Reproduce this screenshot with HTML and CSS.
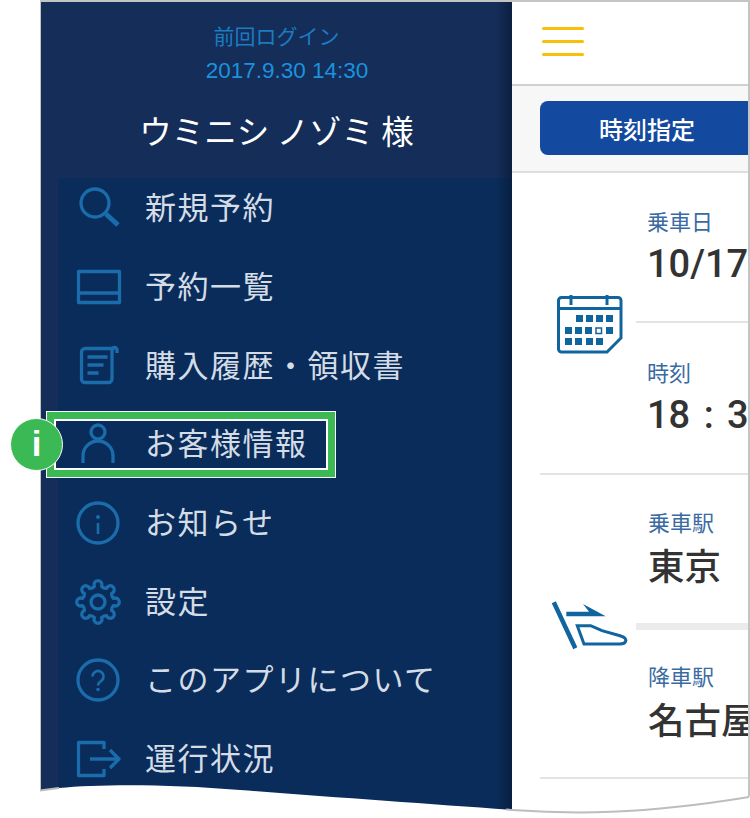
FILE: index.html
```html
<!DOCTYPE html>
<html lang="ja">
<head>
  <meta charset="UTF-8" />
  <title>お客様情報</title>
  <link rel="stylesheet" href="styles.css">
</head>
<body>
  <div class="stage">
    <div class="frame">
      <!-- Drawer -->
      <aside class="drawer">
        <div class="account">
          <p class="login-label">前回ログイン</p>
          <p class="login-date">2017.9.30 14:30</p>
          <p class="user-name">ウミニシ ノゾミ 様</p>
        </div>
        <nav class="menu">
          <ul class="menu-list">
            <li class="menu-item">
              <svg class="menu-icon" viewBox="0 0 48 48"><circle cx="21" cy="19" r="14"/><path class="thick" d="M32 30l12 11"/></svg>
              <span>新規予約</span>
            </li>
            <li class="menu-item">
              <svg class="menu-icon" viewBox="0 0 48 48"><rect x="4.5" y="8.5" width="41" height="31"/><path d="M4.5 30h41"/></svg>
              <span>予約一覧</span>
            </li>
            <li class="menu-item">
              <svg class="menu-icon" viewBox="0 0 48 48"><path d="M43 11V8a2.500 2.500 0 0 0-5 0v29a3.500 3.500 0 0 1-3.500 3.500H11A3.500 3.500 0 0 1 7.500 37V10A3.500 3.500 0 0 1 11 6.500h29.500"/><path d="M13.500 15h20M13.500 23h16M13.500 31h11"/></svg>
              <span>購入履歴・領収書</span>
            </li>
            <li class="menu-item">
              <svg class="menu-icon" viewBox="0 0 48 48"><circle cx="24" cy="12" r="7"/><path d="M9 43v-7a15 15 0 0 1 30 0v7"/></svg>
              <span>お客様情報</span>
            </li>
            <li class="menu-item">
              <svg class="menu-icon" viewBox="0 0 48 48"><circle cx="24" cy="24" r="20"/><path class="thin" d="M24 24v11"/><circle class="dot" cx="24" cy="18" r="2"/></svg>
              <span>お知らせ</span>
            </li>
            <li class="menu-item">
              <svg class="menu-icon" viewBox="0 0 48 48"><path d="M20.400 8.400A4 4 0 1 1 27.600 8.400A6 6 0 0 0 32.500 10.400A4 4 0 1 1 37.600 15.500A6 6 0 0 0 39.600 20.400A4 4 0 1 1 39.600 27.600A6 6 0 0 0 37.600 32.500A4 4 0 1 1 32.500 37.600A6 6 0 0 0 27.600 39.600A4 4 0 1 1 20.400 39.600A6 6 0 0 0 15.500 37.600A4 4 0 1 1 10.400 32.500A6 6 0 0 0 8.400 27.600A4 4 0 1 1 8.400 20.400A6 6 0 0 0 10.400 15.500A4 4 0 1 1 15.500 10.400A6 6 0 0 0 20.400 8.400Z"/><circle cx="24" cy="24" r="7"/></svg>
              <span>設定</span>
            </li>
            <li class="menu-item">
              <svg class="menu-icon" viewBox="0 0 48 48"><circle cx="24" cy="24" r="20"/><path class="thin" d="M18.500 20.500a5.500 5.500 0 1 1 8.500 4.600c-2 1.200-3 2-3 4.400"/><circle class="dot" cx="24" cy="33.500" r="1.800"/></svg>
              <span>このアプリについて</span>
            </li>
            <li class="menu-item">
              <svg class="menu-icon" viewBox="0 0 48 48"><path d="M30 14V7.500H4.500v33H30V34"/><path d="M16 24h28M36 15l9 9-9 9"/></svg>
              <span>運行状況</span>
            </li>
          </ul>
        </nav>
      </aside>

      <!-- Main screen behind the drawer -->
      <main class="main">
        <header class="topbar">
          <div class="burger"><i></i><i></i><i></i></div>
        </header>
        <div class="tabs">
          <button class="tab-btn">時刻指定</button>
        </div>

        <section class="group">
          <div class="group-icon">
            <svg class="calendar" viewBox="0 0 70 62">
              <path d="M7 4.500h56a3 3 0 0 1 3 3V45L52 59H6.500a3 3 0 0 1-3-3V7.500a3 3 0 0 1 3-3z"/>
              <path d="M3.500 15.500H66M16 2v10M52 2v10"/>
              <g class="cells">
                <rect x="21" y="22" width="7" height="7"/><rect x="31" y="22" width="7" height="7"/><rect x="41" y="22" width="7" height="7"/><rect x="51" y="22" width="7" height="7"/>
                <rect x="10" y="34" width="7" height="7"/><rect x="20" y="34" width="7" height="7"/><rect x="30" y="34" width="7" height="7"/><rect x="51" y="34" width="7" height="7"/>
                <rect x="10" y="45" width="7" height="7"/><rect x="20" y="45" width="7" height="7"/><rect x="31" y="45" width="7" height="7"/><rect x="41" y="45" width="7" height="7"/>
              </g>
              <rect x="41" y="35" width="5.500" height="5.500" stroke-width="1.500"/>
            </svg>
          </div>
          <div class="fields">
            <div class="field field-line">
              <p class="field-label">乗車日</p>
              <p class="field-value">10/17</p>
            </div>
            <div class="field field-time">
              <p class="field-label">時刻</p>
              <p class="field-value">18 : 30</p>
            </div>
          </div>
        </section>

        <section class="group">
          <div class="group-icon">
            <svg class="train" viewBox="0 0 80 55">
              <path class="bold" d="M4.800 3.300l21.500 46"/>
              <polygon class="solid" points="17.300,12.700 40,12.700 34,5 56.700,17.300 17.300,17.300"/>
              <path d="M28.300 26.700h13.400L53 31.700l18 5c5 1.400 6.500 3.500 5.500 6-.8 1.800-2.500 2.300-5.500 2.300H35z"/>
            </svg>
          </div>
          <div class="fields">
            <div class="field field-from">
              <p class="field-label">乗車駅</p>
              <p class="field-value station">東京</p>
            </div>
            <div class="field field-to">
              <p class="field-label">降車駅</p>
              <p class="field-value station">名古屋</p>
            </div>
          </div>
        </section>
      </main>
    </div>

    <!-- Callout over the menu -->
    <div class="callout"></div>
    <div class="callout-badge">i</div>

    <!-- Torn bottom edge of the screenshot -->
    <svg class="torn" viewBox="0 0 750 818">
      <path class="torn-fill" d="M38 790.500L59 788C100 784 170 784 240 790C330 797 430 804 512 810C570 814 640 815 750 796.500V818H38Z"/>
      <path class="torn-line" d="M40 790.500L59 788M506 809.500L512 810C570 814 640 815 749 797"/>
    </svg>
  </div>
</body>
</html>
```

FILE: styles.css
```css
/* Base styling */
body {
  margin: 0;
  background: #fff;
  font-family: "Noto Sans CJK JP", "Noto Sans", sans-serif;
  overflow: hidden;
}
p { margin: 0; }
.stage {
  position: relative;
  width: 750px;
  height: 818px;
  overflow: hidden;
}
.frame {
  display: flex;
  box-sizing: border-box;
  width: 710px;
  height: 818px;
  margin-left: 40px;
  border: solid #c4c4c4;
  border-width: 2px 2px 0 1.500px;
  overflow: hidden;
}

/* Drawer */
.drawer {
  position: relative;
  display: flex;
  flex-direction: column;
  flex: 0 0 471px;
  background: #142d59;
}
.drawer::after {
  content: "";
  position: absolute;
  top: 0;
  right: 0;
  bottom: 0;
  width: 16px;
  background: linear-gradient(to right, rgba(3, 15, 35, 0), rgba(3, 15, 35, 0.45));
}
.account {
  flex: 0 0 176px;
  text-align: center;
}
.login-label {
  margin-top: 17px;
  line-height: 32px;
  font-size: 21px;
  color: #1b7cc0;
}
.login-date {
  margin-top: 4px;
  padding-left: 21px;
  line-height: 32px;
  font-family: "Liberation Sans", Arial, sans-serif;
  font-size: 22.500px;
  color: #1c92de;
}
.user-name {
  margin-top: 19px;
  line-height: 48px;
  font-size: 32.500px;
  color: #fff;
  white-space: pre;
}
.menu {
  flex: 1;
  margin-left: 17px;
  background: #0a2c5a;
  overflow: hidden;
}
.menu-list {
  list-style: none;
  margin: -9px 0 0;
  padding: 0;
}
.menu-item {
  display: flex;
  align-items: center;
  gap: 23px;
  height: 78.700px;
  padding-left: 16px;
  font-size: 31px;
  letter-spacing: 1.500px;
  color: #d4dce6;
  white-space: nowrap;
}
.menu-item span { margin-bottom: 5px; }
.menu-icon {
  flex: 0 0 48px;
  width: 48px;
  height: 48px;
  fill: none;
  stroke: #1a6cab;
  stroke-width: 3.300;
  stroke-linejoin: round;
}
.menu-icon .thick { stroke-width: 5; }
.menu-icon .thin { stroke-width: 2.600; }
.menu-icon .dot {
  fill: #1a6cab;
  stroke: none;
}

/* Main screen */
.main {
  flex: 1;
  min-width: 0;
  background: #fff;
}
.topbar {
  display: flex;
  align-items: center;
  box-sizing: border-box;
  height: 84px;
  padding: 0 0 4px 30px;
  border-bottom: 2px solid #d0d0d0;
}
.burger {
  display: flex;
  flex-direction: column;
  gap: 10px;
  width: 42px;
}
.burger i {
  height: 3px;
  border-radius: 2px;
  background: #f9bf0b;
}
.tabs {
  box-sizing: border-box;
  height: 87px;
  padding: 15px 0 0 28px;
  background: #f7f7f7;
  border-bottom: 2px solid #dedede;
}
.tab-btn {
  display: block;
  width: 230px;
  height: 54px;
  padding: 0;
  border: none;
  border-radius: 8px;
  background: #1449a0;
  color: #fff;
  font-family: inherit;
  font-size: 24px;
  font-weight: 500;
  text-align: left;
  text-indent: 59px;
}
.group {
  display: flex;
  margin-left: 28px;
  border-bottom: 2px solid #e4e4e4;
}
.group-icon {
  display: flex;
  align-items: center;
  flex: 0 0 96px;
}
.calendar {
  width: 70px;
  height: 62px;
  margin-left: 15px;
  margin-top: 1px;
  fill: none;
  stroke: #10659f;
  stroke-width: 3;
}
.calendar .cells {
  fill: #10659f;
  stroke: none;
}
.train {
  width: 80px;
  height: 55px;
  margin-left: 9px;
  fill: none;
  stroke: #10659f;
  stroke-width: 3;
}
.train .bold { stroke-width: 4.500; }
.train .solid {
  fill: #10659f;
  stroke: none;
}
.fields {
  flex: 1;
  min-width: 0;
  overflow: hidden;
}
.field {
  box-sizing: border-box;
  height: 150px;
  padding: 31px 0 0 11px;
  white-space: nowrap;
}
.field-line { border-bottom: 2px solid #e4e4e4; }
.field-time { padding-top: 32px; }
.field-from {
  height: 155px;
  padding: 30px 0 0 12px;
  border-bottom: 7px solid #ebebeb;
}
.field-to {
  height: 147px;
  padding: 29px 0 0 12px;
}
.field-label {
  margin-bottom: 2px;
  line-height: 32px;
  font-size: 22px;
  color: #3b6aa3;
}
.field-value {
  line-height: 52px;
  font-family: Roboto, sans-serif;
  font-size: 38px;
  font-weight: 500;
  word-spacing: 4px;
  color: #333;
}
.field-value.station {
  line-height: 52px;
  font-family: "Noto Sans CJK JP", sans-serif;
  font-size: 36.500px;
  font-weight: 500;
}

/* Callout */
.callout {
  position: absolute;
  left: 47px;
  top: 412px;
  box-sizing: border-box;
  width: 288px;
  height: 65px;
  border: 7px solid #3bb954;
  outline: 2px solid #fff;
  outline-offset: -9px;
  box-shadow: 0 0 0 1px #fff;
}
.callout-badge {
  position: absolute;
  left: 10px;
  top: 418px;
  box-sizing: border-box;
  width: 53px;
  height: 53px;
  border: 1.500px solid #fff;
  border-radius: 50%;
  background: #3bb954;
  color: #fff;
  font-family: "Liberation Sans", Arial, sans-serif;
  font-size: 35px;
  font-weight: 700;
  line-height: 50px;
  text-align: center;
}

/* Torn edge */
.torn {
  position: absolute;
  left: 0;
  top: 0;
  width: 750px;
  height: 818px;
}
.torn-fill { fill: #fff; }
.torn-line {
  fill: none;
  stroke: #bdbdbd;
  stroke-width: 2;
}
```
